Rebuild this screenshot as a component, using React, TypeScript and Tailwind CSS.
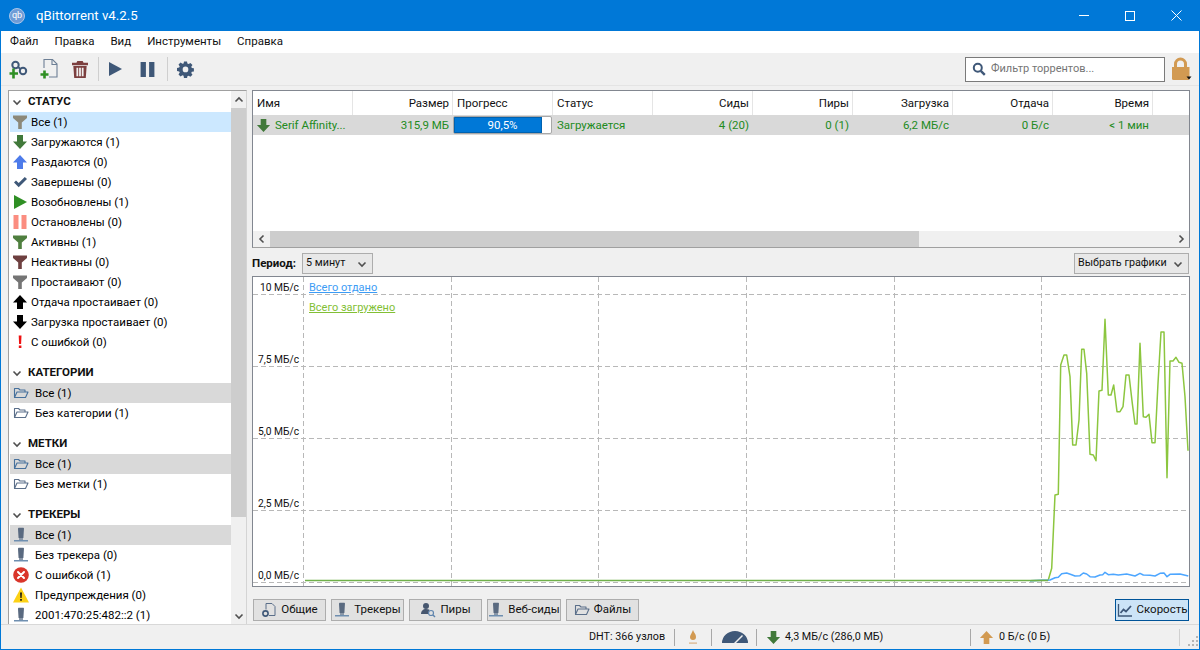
import React from 'react';

type IconProps = { className?: string };

const Funnel = ({ color }: { color: string }) => (
    <svg width="16" height="16" viewBox="0 0 16 16" className="shrink-0">
        <path d="M1 1.5h14v2.5L9.8 8.5V15H6.2V8.5L1 4z" fill={color} />
    </svg>
);

const Arrow = ({ color, up, size = 16 }: { color: string; up?: boolean; size?: number }) => (
    <svg width={size} height={size} viewBox="0 0 16 16" className="shrink-0">
        <path d={up ? 'M8 1l7 7.5h-4V15H5V8.5H1z' : 'M8 15l7-7.5h-4V1H5v6.5H1z'} fill={color} />
    </svg>
);

const Check = () => (
    <svg width="16" height="16" viewBox="0 0 16 16" className="shrink-0">
        <path d="M2 8.5l2-2 2.7 2.6L12.8 3 15 5l-8.3 8.3z" fill="#3f5878" />
    </svg>
);

const PlayIcon = ({ color, size = 16 }: { color: string; size?: number }) => (
    <svg width={size} height={size} viewBox="0 0 16 16" className="shrink-0">
        <path d="M2 1l13 7-13 7z" fill={color} />
    </svg>
);

const PauseIcon = ({ color, size = 16 }: { color: string; size?: number }) => (
    <svg width={size} height={size} viewBox="0 0 16 16" className="shrink-0">
        <path d="M1.5 1h5v14h-5zM9.5 1h5v14h-5z" fill={color} />
    </svg>
);

const Bang = () => (
    <svg width="16" height="16" viewBox="0 0 16 16" className="shrink-0">
        <path d="M6.7 1.5h2.8l-.4 8.5H7.1zM6.8 11.5h2.6V14H6.8z" fill="#ee1111" />
    </svg>
);

const Folder = ({ color = '#5b6f8a' }: { color?: string }) => (
    <svg width="16" height="16" viewBox="0 0 16 16" fill="none" className="shrink-0">
        <path d="M1.5 12.5V3.5h4l1.5 1.5h5v2M1.5 12.5l2.5-5.5h11l-2.5 5.5z" stroke={color} strokeWidth="1.1" strokeLinejoin="round" />
    </svg>
);

const Tracker = () => (
    <svg width="16" height="16" viewBox="0 0 16 16" className="shrink-0">
        <path d="M5 1.500Q5 .8 5.700 .8h4.600q.7 0 .7.7L10.400 11H5.600z" fill="#5a6a80" />
        <path d="M1 13h14v1.500H1z" fill="#6f8fb0" />
        <path d="M6 11h4v2H6z" fill="#8a97a8" />
    </svg>
);

const ErrorIcon = () => (
    <svg width="16" height="16" viewBox="0 0 16 16" className="shrink-0">
        <circle cx="8" cy="8" r="7.8" fill="#d9352a" />
        <path d="M5 5l6 6M11 5l-6 6" stroke="#fff" strokeWidth="2" strokeLinecap="round" />
    </svg>
);

const WarnIcon = () => (
    <svg width="16" height="16" viewBox="0 0 16 16" className="shrink-0">
        <path d="M8 .5L16 15.5H0z" fill="#fcd116" />
        <path d="M7.1 5.5h1.8l-.3 5.5H7.4zM7.2 12h1.6v1.7H7.2z" fill="#111" />
    </svg>
);

const Chevron = ({ dir }: { dir: 'up' | 'down' | 'left' | 'right' }) => {
    const d = {
        up: 'M1.5 6.5L5 3l3.5 3.5',
        down: 'M1.5 3.5L5 7l3.5-3.5',
        left: 'M6.5 1.5L3 5l3.5 3.5',
        right: 'M3.5 1.5L7 5 3.5 8.5',
    }[dir];
    return (
        <svg width="10" height="10" viewBox="0 0 10 10" fill="none" className="shrink-0">
            <path d={d} stroke="#505050" strokeWidth="1.6" />
        </svg>
    );
};

const Gear = ({ className }: IconProps) => (
    <svg width="17" height="17" viewBox="0 0 18 18" className={className}>
        <path
            fillRule="evenodd"
            fill="#3f5878"
            d="M7.4 1h3.2l.4 2.2 1.3.6 1.9-1.3 2.2 2.2-1.3 1.9.6 1.3 2.2.4v3.2l-2.2.4-.6 1.3 1.3 1.9-2.2 2.2-1.9-1.3-1.3.6-.4 2.2H7.4L7 16.2l-1.3-.6-1.9 1.3-2.2-2.2 1.3-1.9-.6-1.3L0 11.1V7.9l2.3-.4.6-1.3-1.3-1.9 2.2-2.2 1.9 1.3L7 3.2zM9 6.4a3 3 0 100 6 3 3 0 000-6z"
            transform="translate(0 -.5)"
        />
    </svg>
);

const ruleStatus = [
    { label: 'Все (1)', icon: <Funnel color="#8c8878" />, active: true },
    { label: 'Загружаются (1)', icon: <Arrow color="#41793a" /> },
    { label: 'Раздаются (0)', icon: <Arrow color="#4d7bea" up /> },
    { label: 'Завершены (0)', icon: <Check /> },
    { label: 'Возобновлены (1)', icon: <PlayIcon color="#2f8f24" /> },
    { label: 'Остановлены (0)', icon: <PauseIcon color="#fb8d80" /> },
    { label: 'Активны (1)', icon: <Funnel color="#4f7f3f" /> },
    { label: 'Неактивны (0)', icon: <Funnel color="#6e4040" /> },
    { label: 'Простаивают (0)', icon: <Funnel color="#757575" /> },
    { label: 'Отдача простаивает (0)', icon: <Arrow color="#000" up /> },
    { label: 'Загрузка простаивает (0)', icon: <Arrow color="#000" /> },
    { label: 'С ошибкой (0)', icon: <Bang /> },
];

const sections = [
    {
        title: 'КАТЕГОРИИ',
        rows: [
            { label: 'Все (1)', icon: <Folder color="#46709c" />, grey: true },
            { label: 'Без категории (1)', icon: <Folder /> },
        ],
    },
    {
        title: 'МЕТКИ',
        rows: [
            { label: 'Все (1)', icon: <Folder color="#46709c" />, grey: true },
            { label: 'Без метки (1)', icon: <Folder /> },
        ],
    },
    {
        title: 'ТРЕКЕРЫ',
        rows: [
            { label: 'Все (1)', icon: <Tracker />, grey: true },
            { label: 'Без трекера (0)', icon: <Tracker /> },
            { label: 'С ошибкой (1)', icon: <ErrorIcon /> },
            { label: 'Предупреждения (0)', icon: <WarnIcon /> },
            { label: '2001:470:25:482::2 (1)', icon: <Tracker /> },
        ],
    },
];

const SectionHead = ({ title }: { title: string }) => (
    <div className="h-[21px] flex items-center pl-[2px] gap-[6px] font-bold text-[#111]">
        <span className="w-[10px] flex justify-center"><Chevron dir="down" /></span>
        <span>{title}</span>
    </div>
);

const Sidebar = () => (
    <div className="w-[239px] h-[535px] shrink-0 flex bg-white border border-[#d4d4d4] border-l-[#a0a0a0] border-t-[#a0a0a0] overflow-hidden">
        <div className="flex-1 min-w-0 pl-[1px]">
            <SectionHead title="СТАТУС" />
            {ruleStatus.map(r => (
                <div key={r.label} className={`h-[20px] flex items-center pl-[2px] gap-[3px] ${r.active ? 'bg-[#cce8ff]' : ''}`}>
                    {r.icon}
                    <span className="pt-[1px]">{r.label}</span>
                </div>
            ))}
            {sections.map(s => (
                <div key={s.title} className="pt-[10px]">
                    <SectionHead title={s.title} />
                    {s.rows.map(r => (
                        <div key={r.label + s.title} className={`h-[20px] flex items-center pl-[3px] gap-[6px] ${'grey' in r && r.grey ? 'bg-[#d9d9d9]' : ''}`}>
                            {r.icon}
                            <span className="pt-[1px]">{r.label}</span>
                        </div>
                    ))}
                </div>
            ))}
        </div>
        <div className="w-[15px] shrink-0 flex flex-col bg-[#f0f0f0]">
            <div className="h-[17px] flex items-center justify-center"><Chevron dir="up" /></div>
            <div className="h-[409px] bg-[#cdcdcd]" />
            <div className="flex-1" />
            <div className="h-[17px] flex items-center justify-center"><Chevron dir="down" /></div>
        </div>
    </div>
);

const columns = [
    { label: 'Имя', align: 'text-left' },
    { label: 'Размер', align: 'text-right' },
    { label: 'Прогресс', align: 'text-left' },
    { label: 'Статус', align: 'text-left' },
    { label: 'Сиды', align: 'text-right' },
    { label: 'Пиры', align: 'text-right' },
    { label: 'Загрузка', align: 'text-right' },
    { label: 'Отдача', align: 'text-right' },
    { label: 'Время', align: 'text-right' },
];

const cellText = 'w-[100px] shrink-0 pl-[3px] pr-[4px] pt-[1px] text-right text-[#228b22]';

const TorrentTable = () => (
    <div className="h-[158px] shrink-0 flex flex-col bg-white border border-[#828790] border-b-[#a0a0a0]">
        <div className="h-[24px] flex shrink-0">
            {columns.map(c => (
                <div key={c.label} className={`w-[100px] shrink-0 pl-[4px] pr-[3px] leading-[25px] border-r border-[#e5e5e5] text-[#111] ${c.align}`}>
                    {c.label}
                </div>
            ))}
        </div>
        <div className="h-[20px] flex items-center shrink-0 bg-[#d9d9d9]">
            <div className="w-[100px] shrink-0 flex items-center pl-[3px] gap-[4px] text-[#228b22]">
                <Arrow color="#41793a" size={15} />
                <span className="pt-[1px]">Serif Affinity...</span>
            </div>
            <div className={cellText}>315,9 МБ</div>
            <div className="w-[100px] shrink-0 h-[20px] py-[1px] pr-[1px]">
                <div className="relative h-full flex rounded-[2px] border border-[#a8a8a8] bg-white overflow-hidden">
                    <div className="w-[90.5%] bg-[#0078d7] border border-[#0062b0]" />
                    <div className="absolute inset-0 text-white text-center leading-[17px]">90,5%</div>
                </div>
            </div>
            <div className="w-[100px] shrink-0 pl-[4px] pt-[1px] text-[#228b22]">Загружается</div>
            <div className={cellText}>4 (20)</div>
            <div className={cellText}>0 (1)</div>
            <div className={cellText}>6,2 МБ/с</div>
            <div className={cellText}>0 Б/с</div>
            <div className={cellText}>&lt; 1 мин</div>
        </div>
        <div className="flex-1" />
        <div className="h-[16px] flex shrink-0 bg-[#f0f0f0]">
            <div className="w-[17px] flex items-center justify-center"><Chevron dir="left" /></div>
            <div className="w-[649px] bg-[#cdcdcd]" />
            <div className="flex-1" />
            <div className="w-[17px] flex items-center justify-center"><Chevron dir="right" /></div>
        </div>
    </div>
);

const Combo = ({ label, width }: { label: string; width: string }) => (
    <div className={`${width} h-[21px] flex items-center justify-between pl-[3px] pr-[5px] border border-[#adadad] bg-[#e8e8e8] text-[10.75px] text-[#111] whitespace-nowrap`}>
        <span>{label}</span>
        <Chevron dir="down" />
    </div>
);

const green: [number, number][] = [
    [0, 842], [55, 840], [65, 805], [75, 585], [85, 583], [92, 195], [102, 165], [110, 165], [120, 230], [128, 435], [138, 435],
    [147, 360], [155, 148], [162, 148], [170, 220], [180, 463], [190, 465], [198, 482], [207, 273], [216, 271], [225, 58],
    [235, 285], [243, 285], [251, 255], [261, 335], [270, 335], [279, 320], [288, 225], [297, 225], [307, 310], [315, 372],
    [321, 372], [330, 130], [340, 350], [348, 352], [357, 343], [366, 428], [375, 428], [384, 250], [393, 96], [402, 96],
    [411, 533], [420, 183], [429, 183], [438, 172], [447, 187], [456, 190], [465, 290], [474, 452],
];

const blue: [number, number][] = [
    [0, 842], [60, 840], [75, 833], [85, 832], [95, 821], [110, 819], [125, 824], [135, 828], [150, 827], [160, 819], [170, 822],
    [180, 830], [195, 831], [210, 825], [218, 824], [225, 817], [235, 824], [250, 823], [265, 825], [290, 822], [315, 828],
    [330, 820], [340, 825], [360, 826], [375, 828], [390, 820], [402, 819], [411, 830], [420, 823], [450, 822], [475, 828],
];

// the curves were read off a 3x crop, so map them back to page pixels
const toPoints = (pts: [number, number][]) =>
    pts.map(([x, y]) => `${(1030 + x / 3).toFixed(1)},${(300 + y / 3).toFixed(1)}`).join(' ');

const Chart = () => (
    <div className="relative h-[311px] shrink-0 bg-white border border-[#828790] overflow-hidden">
        <svg width="936" height="309" viewBox="253 277 936 309" className="block">
            {[294, 366, 438, 510, 582].map(y => (
                <line key={y} x1="253" x2="1189" y1={y + 0.5} y2={y + 0.5} stroke="#b8b8b8" strokeDasharray="5 3" />
            ))}
            {[303, 451, 598, 746, 894, 1041].map(x => (
                <line key={x} x1={x + 0.5} x2={x + 0.5} y1="277" y2="586" stroke="#b8b8b8" strokeDasharray="5 3" />
            ))}
            <polyline points={toPoints(green)} fill="none" stroke="#8cc63f" strokeWidth="1.5" strokeLinejoin="round" />
            <polyline points={toPoints(blue)} fill="none" stroke="#4da6ff" strokeWidth="1.5" strokeLinejoin="round" />
            <polyline points="305,580.5 1048,580.5" fill="none" stroke="#6fb04a" strokeWidth="1.5" />
        </svg>
        <div className="absolute left-0 top-[1px] w-[46px] flex flex-col gap-[52px] text-[10.25px] text-[#111]">
            {['10 МБ/с', '7,5 МБ/с', '5,0 МБ/с', '2,5 МБ/с', '0,0 МБ/с'].map(l => (
                <div key={l} className="h-[20px] leading-[20px] text-right whitespace-nowrap">{l}</div>
            ))}
        </div>
        <div className="absolute left-[56px] top-[1px] flex flex-col gap-0 items-start text-[11px]">
            <div className="h-[20px] leading-[20px] text-[#3c9cf5] underline">Всего отдано</div>
            <div className="h-[20px] leading-[20px] text-[#82bf35] underline">Всего загружено</div>
        </div>
    </div>
);

const PageIcon = () => (
    <svg width="16" height="16" viewBox="0 0 16 16" fill="none" className="shrink-0">
        <path d="M5 1.5h6l3 3v9H8" stroke="#5b6f8a" />
        <path d="M5 1.5v6" stroke="#5b6f8a" />
        <circle cx="4.5" cy="11.5" r="2.6" stroke="#3f5878" strokeWidth="1.6" />
    </svg>
);

const PeersIcon = () => (
    <svg width="16" height="16" viewBox="0 0 16 16" fill="none" className="shrink-0">
        <circle cx="6" cy="4" r="3" fill="#46566e" />
        <path d="M1 12c0-3 2-5 5-5s3.500 1 3.500 1L8 12z" fill="#46566e" />
        <circle cx="11" cy="11" r="2.500" stroke="#5f84ad" strokeWidth="1.2" />
        <path d="M13 13l2 2" stroke="#5f84ad" strokeWidth="1.400" />
    </svg>
);

const SpeedIcon = () => (
    <svg width="16" height="16" viewBox="0 0 16 16" fill="none" className="shrink-0">
        <path d="M1.500 2v12H15" stroke="#3f5878" strokeWidth="1.300" />
        <path d="M3.500 11l3-3.500 2.500 2 5-5.500" stroke="#3f5878" strokeWidth="1.800" />
    </svg>
);

const tabs = [
    { label: 'Общие', icon: <PageIcon />, w: 'w-[73px]' },
    { label: 'Трекеры', icon: <Tracker />, w: 'w-[73px]' },
    { label: 'Пиры', icon: <PeersIcon />, w: 'w-[73px]' },
    { label: 'Веб-сиды', icon: <Tracker />, w: 'w-[74px]' },
    { label: 'Файлы', icon: <Folder />, w: 'w-[73px]' },
];

const TabBar = () => (
    <div className="h-[22px] shrink-0 flex items-center gap-[5px] mt-[12px] pl-[1px] pr-[1px]">
        {tabs.map(t => (
            <div key={t.label} className={`${t.w} h-[22px] flex items-center justify-center gap-[4px] border border-[#adadad] bg-[#e1e1e1] text-[#111] whitespace-nowrap`}>
                {t.icon}
                <span>{t.label}</span>
            </div>
        ))}
        <div className="ml-auto w-[74px] h-[22px] flex items-center justify-center gap-[4px] border border-[#005499] bg-[#cce4f7] text-[#111]">
            <SpeedIcon />
            <span>Скорость</span>
        </div>
    </div>
);

const AddLinkIcon = () => (
    <svg width="20" height="22" viewBox="0 0 20 22" fill="none">
        <circle cx="6.500" cy="7" r="3.200" stroke="#3f5878" strokeWidth="2" />
        <circle cx="14" cy="13" r="3.200" stroke="#3f5878" strokeWidth="2" />
        <path d="M9 9l2.500 2" stroke="#3f5878" strokeWidth="2" />
        <path d="M4.500 10.500v10M0.500 15.500h8.500" stroke="#2f8f24" strokeWidth="2.600" />
    </svg>
);

const AddFileIcon = () => (
    <svg width="18" height="22" viewBox="0 0 18 22" fill="none">
        <path d="M4 10V1.500h8.500l4.500 4.500v13H9" stroke="#6d7f95" strokeWidth="1.100" />
        <path d="M12 1.500V6.500h5" stroke="#6d7f95" strokeWidth="1.100" />
        <path d="M4.500 12.500v8M0.500 16.500h8" stroke="#2f8f24" strokeWidth="2.600" />
    </svg>
);

const TrashIcon = () => (
    <svg width="16" height="17" viewBox="0 0 18 20" preserveAspectRatio="none" className="block">
        <path fillRule="evenodd" fill="#7c3f3f" d="M6 0h6l1 2h5v3H0V2h5zM1.500 6h15L15.500 20h-13zM5 8v10h2V8zM8 8v10h2V8zM11 8v10h2V8z" />
    </svg>
);

const LockIcon = () => (
    <svg width="22" height="26" viewBox="0 0 22 26">
        <path d="M4 11V8a6.500 6.500 0 0113 0v3h-3V8a3.500 3.500 0 00-7 0v3z" fill="#d29a52" />
        <path d="M2 11h17.500v11.500q0 1.500-1.500 1.500H3.500Q2 24 2 22.500z" fill="#d29a52" />
        <path d="M16.500 20.500h5l-2.500 3z" fill="#111" />
    </svg>
);

const Toolbar = () => (
    <div className="h-[33px] shrink-0 flex items-center bg-[#f0f0f0] border-b border-[#e4e4e4] pl-[8px] pr-[7px]">
        <AddLinkIcon />
        <span className="ml-[11px]"><AddFileIcon /></span>
        <span className="ml-[14px]"><TrashIcon /></span>
        <div className="w-px h-[24px] bg-[#cfcfcf] ml-[10px] mr-[8px]" />
        <PlayIcon color="#3f5878" size={16} />
        <span className="ml-[16px]"><PauseIcon color="#3f5878" size={17} /></span>
        <div className="w-px h-[24px] bg-[#cfcfcf] ml-[11px] mr-[9px]" />
        <Gear />
        <div className="ml-auto w-[200px] h-[25px] flex items-center gap-[5px] pl-[6px] bg-white border border-[#7a7a7a] text-[11px] text-[#757575]">
            <svg width="14" height="14" viewBox="0 0 14 14" fill="none" className="shrink-0">
                <circle cx="5.800" cy="5.800" r="4" stroke="#3f5878" strokeWidth="2" />
                <path d="M8.800 8.800l4 4" stroke="#3f5878" strokeWidth="2.400" />
            </svg>
            <span>Фильтр торрентов...</span>
        </div>
        <span className="ml-[5px] h-[26px]"><LockIcon /></span>
    </div>
);

const Sep = ({ className = '' }: IconProps) => <div className={`w-px h-[17px] bg-[#a8a8a8] ${className}`} />;

const StatusBar = () => (
    <div className="h-[25px] shrink-0 flex items-center pl-[588px] border-t border-[#d8d8d8] text-[10.75px] text-[#111] whitespace-nowrap">
        <span className="w-[85px]">DHT: 366 узлов</span>
        <Sep />
        <svg width="12" height="16" viewBox="0 0 12 16" className="ml-[12px]">
            <path d="M6 1c1 3 3 4 3 7a3 3 0 01-6 0c0-2 2-4 3-7z" fill="#d29a52" />
            <path d="M2 13.500h8v1.200H2z" fill="#d8b184" />
        </svg>
        <Sep className="ml-[12px]" />
        <svg width="26" height="14" viewBox="0 0 26 14" className="ml-[10px]">
            <path d="M0 13a13 12 0 0126 0H14l7-7-1-1-8 8z" fill="#3f5878" />
        </svg>
        <Sep className="ml-[8px]" />
        <span className="ml-[9px]"><Arrow color="#41793a" size={15} /></span>
        <span className="ml-[4px] w-[185px]">4,3 МБ/с (286,0 МБ)</span>
        <Sep />
        <span className="ml-[8px]"><Arrow color="#d29a52" up size={15} /></span>
        <span className="ml-[5px] w-[180px]">0 Б/с (0 Б)</span>
        <Sep className="bg-[#d0d0d0]" />
        <svg width="12" height="12" viewBox="0 0 12 12" className="ml-[7px] mt-[8px]">
            <path d="M9 1h2v2H9zM5 5h2v2H5zM9 5h2v2H9zM1 9h2v2H1zM5 9h2v2H5zM9 9h2v2H9z" fill="#b5b5b5" />
        </svg>
    </div>
);

export default function App() {
    return (
        <div className="w-[1200px] h-[650px] flex flex-col overflow-hidden bg-[#f0f0f0] border-x border-b border-[#0078d7] text-[11.5px] font-['Roboto','Liberation_Sans',sans-serif]">
            <div className="h-[31px] shrink-0 flex items-center bg-[#0078d7] text-white">
                <div className="ml-[8px] w-[16px] h-[16px] rounded-full bg-[#6f9bd6] border border-[#a9c6ea] flex items-center justify-center text-[9px] leading-none">qb</div>
                <span className="ml-[11px] text-[13.25px]">qBittorrent v4.2.5</span>
                <div className="ml-auto flex items-center">
                    <div className="w-[46px] flex justify-center">
                        <div className="w-[10px] h-px bg-white" />
                    </div>
                    <div className="w-[46px] flex justify-center">
                        <div className="w-[10px] h-[10px] border border-white" />
                    </div>
                    <div className="w-[46px] flex justify-center">
                        <svg width="11" height="11" viewBox="0 0 11 11"><path d="M.5.5l10 10M10.500.5l-10 10" stroke="#fff" /></svg>
                    </div>
                </div>
            </div>
            <div className="h-[22px] shrink-0 flex items-center bg-white pl-[9px] gap-[16px] text-[#111]">
                {['Файл', 'Правка', 'Вид', 'Инструменты', 'Справка'].map(m => <span key={m}>{m}</span>)}
            </div>
            <Toolbar />
            <div className="flex-1 min-h-0 flex gap-[5px] pl-[7px] pr-[9px] pt-[4px]">
                <Sidebar />
                <div className="flex-1 min-w-0 flex flex-col">
                    <TorrentTable />
                    <div className="h-[21px] shrink-0 flex items-center justify-between mt-[5px] mb-[2px] pr-[1px]">
                        <div className="flex items-center">
                            <span className="w-[50px] font-bold text-[#111]">Период:</span>
                            <Combo label="5 минут" width="w-[71px]" />
                        </div>
                        <Combo label="Выбрать графики" width="w-[115px]" />
                    </div>
                    <Chart />
                    <TabBar />
                </div>
            </div>
            <StatusBar />
        </div>
    );
}
